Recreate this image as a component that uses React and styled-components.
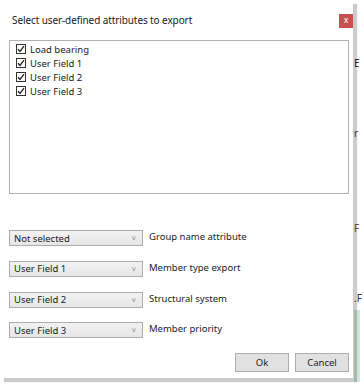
import React from "react";
import styled, { createGlobalStyle } from "styled-components";

const Global = createGlobalStyle`
  html, body { margin: 0; padding: 0; background: #ffffff; }
  body { font-family: "Noto Sans", "Open Sans", sans-serif; }
  * { box-sizing: border-box; }
`;

const Page = styled.div`
  position: relative;
  width: 364px;
  height: 390px;
  overflow: hidden;
  background: #ffffff;
`;

const BackColumn = styled.div`
  position: absolute;
  left: 354px;
  top: 0;
  width: 20px;
  height: 390px;
  display: flex;
  flex-direction: column;
  font-size: 10px;
  color: #333;
`;

const BackText = styled.div`
  height: 12px;
  line-height: 12px;
  margin-top: ${(p) => p.$mt}px;
  color: ${(p) => p.$c || "#2b2b2b"};
`;

const GreenStrip = styled.div`
  margin-top: 6px;
  height: 72px;
  width: 6px;
  background: #d3e6dc;
`;

const Dialog = styled.div`
  position: absolute;
  left: 0;
  top: 0;
  width: 353px;
  height: 378px;
  background: #ffffff;
  box-shadow: 4px 4px 1px rgba(0, 0, 0, 0.2);
  display: flex;
  flex-direction: column;
  padding: 0 4px 0 9px;
`;

const TitleBar = styled.div`
  height: 40px;
  display: flex;
  align-items: flex-start;
  justify-content: space-between;
  margin-right: -4px;
`;

const Title = styled.div`
  margin-top: 13px;
  margin-left: 3px;
  font-size: 10px;
  color: #1a1a1a;
  letter-spacing: -0.1px;
`;

const CloseBtn = styled.div`
  margin-top: 14px;
  width: 14px;
  height: 14px;
  background: #c9504f;
  color: #fff;
  font-size: 8px;
  line-height: 13px;
  text-align: center;
  font-family: "DejaVu Sans", sans-serif;
`;

const ListBox = styled.div`
  width: 340px;
  height: 154px;
  border: 1px solid #b0b0b0;
  padding: 1px 0 0 6px;
  display: flex;
  flex-direction: column;
`;

const Item = styled.label`
  height: 14px;
  display: flex;
  align-items: center;
  gap: 4px;
  font-size: 9.5px;
  color: #222;
`;

const Box = styled.span`
  width: 10px;
  height: 10px;
  border: 1px solid #333;
  background: #fff;
  display: flex;
  align-items: center;
  justify-content: center;
`;

const Fields = styled.div`
  margin-top: 36px;
  display: flex;
  flex-direction: column;
  gap: 14.8px;
`;

const FieldRow = styled.div`
  display: flex;
  align-items: center;
  gap: 6px;
  height: 16px;
`;

const Select = styled.div`
  width: 134px;
  height: 16px;
  border: 1px solid #acacac;
  background: linear-gradient(#f2f2f2, #e6e6e6);
  display: flex;
  align-items: center;
  justify-content: space-between;
  padding: 0 6px 0 4px;
  font-size: 9.5px;
  color: #222;
`;

const Chevron = styled.span`
  font-size: 7px;
  color: #888;
  font-family: "DejaVu Sans", sans-serif;
`;

const FieldLabel = styled.div`
  font-size: 9.5px;
  color: #222;
  margin-top: -3px;
`;

const Footer = styled.div`
  margin-top: 15px;
  display: flex;
  justify-content: flex-end;
  gap: 6px;
  padding-right: 0;
`;

const Button = styled.div`
  width: 54px;
  height: 19px;
  border: 1px solid #adadad;
  background: #e1e1e1;
  font-size: 9.5px;
  color: #222;
  display: flex;
  align-items: center;
  justify-content: center;
`;

const Check = () => (
  <Box>
    <svg width="8" height="8" viewBox="0 0 8 8">
      <path d="M1 4.2 L3 6.4 L7 1.2" fill="none" stroke="#222" strokeWidth="1.3" />
    </svg>
  </Box>
);

const items = ["Load bearing", "User Field 1", "User Field 2", "User Field 3"];
const fields = [
  ["Not selected", "Group name attribute"],
  ["User Field 1", "Member type export"],
  ["User Field 2", "Structural system"],
  ["User Field 3", "Member priority"],
];

export default function App() {
  return (
    <>
      <Global />
      <Page>
        <BackColumn>
          <BackText $mt={57}>E</BackText>
          <BackText $mt={58} $c="#3a4a66">r</BackText>
          <BackText $mt={83} $c="#7a5a30">F</BackText>
          <BackText $mt={58} $c="#3a3050">.F</BackText>
          <GreenStrip />
        </BackColumn>
        <Dialog>
          <TitleBar>
            <Title>Select user-defined attributes to export</Title>
            <CloseBtn>x</CloseBtn>
          </TitleBar>
          <ListBox>
            {items.map((t) => (
              <Item key={t}>
                <Check />
                {t}
              </Item>
            ))}
          </ListBox>
          <Fields>
            {fields.map(([v, l]) => (
              <FieldRow key={l}>
                <Select>
                  <span>{v}</span>
                  <Chevron>v</Chevron>
                </Select>
                <FieldLabel>{l}</FieldLabel>
              </FieldRow>
            ))}
          </Fields>
          <Footer>
            <Button>Ok</Button>
            <Button>Cancel</Button>
          </Footer>
        </Dialog>
      </Page>
    </>
  );
}
